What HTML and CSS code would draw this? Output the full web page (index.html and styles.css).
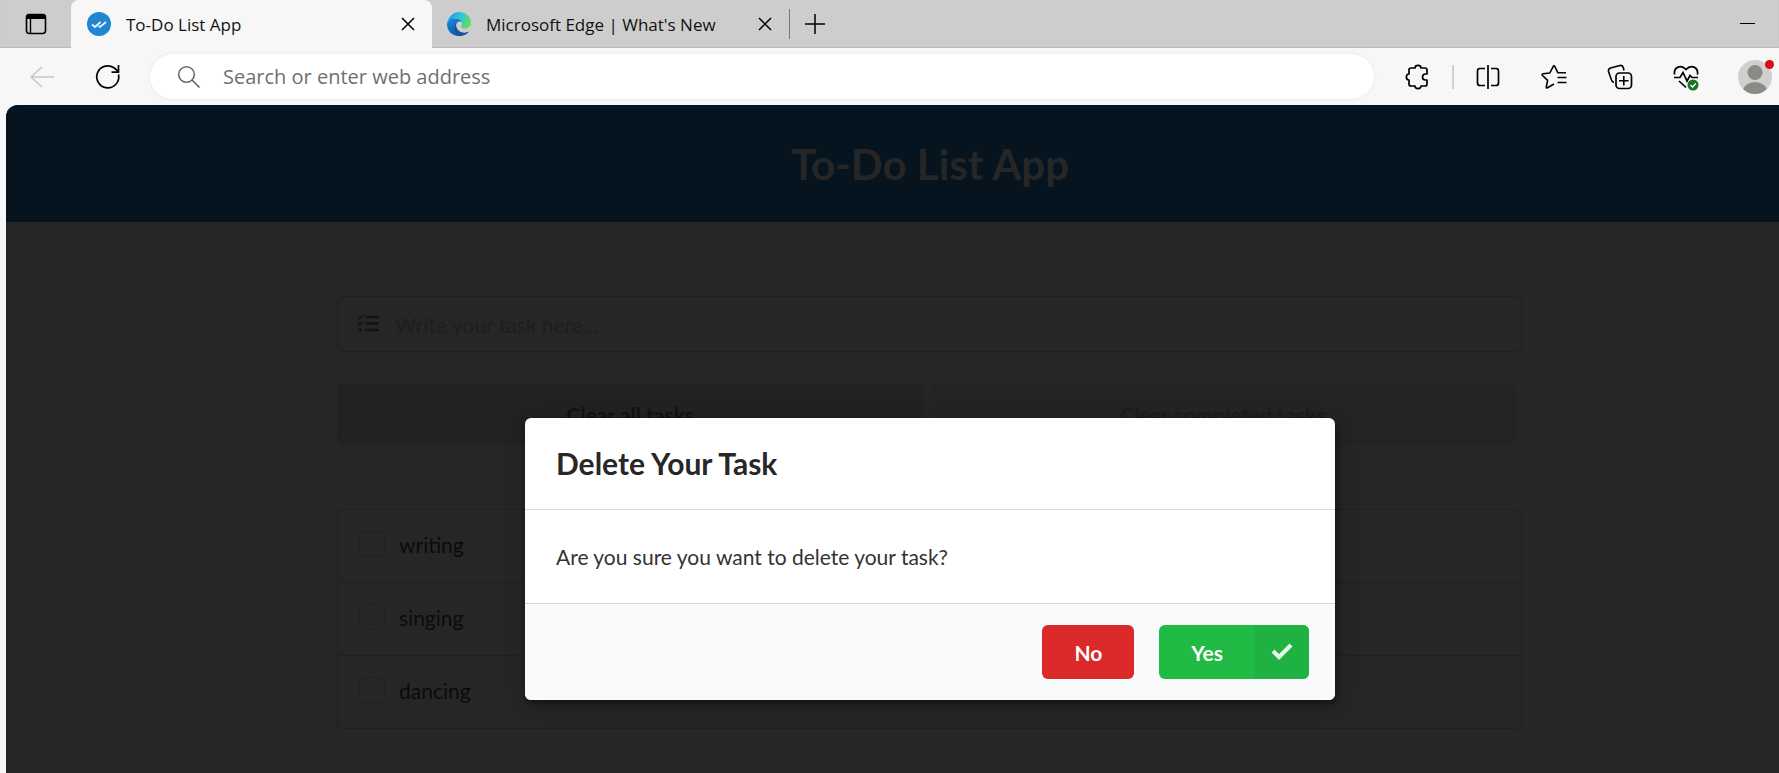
FILE: index.html
```html
<!DOCTYPE html>
<html lang="en">
<head>
<meta charset="utf-8">
<title>To-Do List App</title>
<link rel="stylesheet" href="styles.css">
</head>
<body>
<div class="browser">
  <div class="tab-strip">
    <button class="tab-menu" aria-label="Tab actions menu">
      <svg width="22" height="22" viewBox="0 0 22 22"><rect x="1.5" y="1.5" width="19" height="19" rx="3" fill="none" stroke="#000" stroke-width="1.6"/><path d="M1 6V4a3 3 0 0 1 3-3h14a3 3 0 0 1 3 3v2z" fill="#000"/><path d="M5.5 6v15" stroke="#000" stroke-width="1.4"/></svg>
    </button>
    <div class="tab tab-active">
      <svg class="tab-icon" width="24" height="24" viewBox="0 0 24 24"><circle cx="12" cy="12" r="12" fill="#2185d0"/><path d="M5 12.500l3 2.500 5.500-5M11.500 14l1.500 1 6-5" fill="none" stroke="#e8f4ff" stroke-width="1.800"/></svg>
      <span class="tab-title">To-Do List App</span>
      <button class="tab-close" aria-label="Close tab"><svg width="14" height="14" viewBox="0 0 14 14"><path d="M1 1l12 12M13 1L1 13" stroke="#000" stroke-width="1.5"/></svg></button>
    </div>
    <div class="tab">
      <svg class="tab-icon" width="24" height="24" viewBox="0 0 24 24">
        <defs>
          <linearGradient id="edge-top" x1="0" y1="0.300" x2="1" y2="0.600"><stop offset="0" stop-color="#2493df"/><stop offset="0.500" stop-color="#2fc3dc"/><stop offset="1" stop-color="#66e05a"/></linearGradient>
          <linearGradient id="edge-low" x1="0" y1="0" x2="0.700" y2="1"><stop offset="0" stop-color="#168de0"/><stop offset="1" stop-color="#104c9c"/></linearGradient>
        </defs>
        <path d="M0 12C1 5 6 0 12 0c7 0 12 5 12 10.500 0 4-3 6-6 6-2.500 0-4-1-4-1.700 0-.6 1-1.200 1-3C15 9 12 6.500 8 6.500 4 6.500 1 9 0 12z" fill="url(#edge-top)"/>
        <path d="M0 12c1-3.500 4-5.500 8-5.500 3.500 0 6 1.500 6.800 3.500-3-1.500-5.800.5-5.800 4 0 4 4 7 8 7 2 0 3.500-.6 4.800-1.200C20 22.500 16 24 12 24 5 24 0 19 0 12z" fill="url(#edge-low)"/>
        <path d="M9 11c-3 4.500-1 11 5 12.800 3-.3 6-1.800 7.800-4.300-1.300.7-2.800 1.300-4.800 1.300-5 0-8.500-4.500-8-9.800z" fill="#1b4f9e"/>
      </svg>
      <span class="tab-title">Microsoft Edge | What's New</span>
      <button class="tab-close" aria-label="Close tab"><svg width="14" height="14" viewBox="0 0 14 14"><path d="M1 1l12 12M13 1L1 13" stroke="#000" stroke-width="1.500"/></svg></button>
    </div>
    <span class="tab-divider"></span>
    <button class="new-tab" aria-label="New tab"><svg width="22" height="22" viewBox="0 0 22 22"><path d="M11 1v20M1 11h20" stroke="#000" stroke-width="1.500"/></svg></button>
    <button class="minimize" aria-label="Minimize"><svg width="16" height="2" viewBox="0 0 16 2"><path d="M0 .5h15" stroke="#000"/></svg></button>
  </div>

  <div class="toolbar">
    <button class="tool" aria-label="Back" disabled><svg width="28" height="28" viewBox="0 0 28 28"><path d="M26 14H3M14 4L3 14l11 10" fill="none" stroke="#c8c8c8" stroke-width="1.600"/></svg></button>
    <button class="tool" aria-label="Refresh"><svg width="28" height="28" viewBox="0 0 28 28"><path d="M24.500 11.500A11 11 0 1 1 20 4.800l4.500 3.800M24.500 2v7.200h-7" fill="none" stroke="#000" stroke-width="1.700"/></svg></button>
    <label class="address">
      <svg width="24" height="24" viewBox="0 0 24 24"><circle cx="9.500" cy="9.500" r="7.800" fill="none" stroke="#6a6a6a" stroke-width="1.600"/><path d="M15 15l7.500 7.500" stroke="#6a6a6a" stroke-width="1.700"/></svg>
      <input class="address-input" type="text" placeholder="Search or enter web address" aria-label="Address">
    </label>
    <div class="tools">
      <button class="tool" aria-label="Extensions"><svg width="28" height="28" viewBox="0 0 28 28"><path d="M5 7Q5 5 7 5H11C11 1.500 17 1.500 17 5H21Q23 5 23 7V11H21.500C17.500 11 17.500 17 21.500 17H23V21Q23 23 21 23H17C17 26.500 11 26.500 11 23H7Q5 23 5 21V17C1.500 17 1.500 11 5 11Z" fill="none" stroke="#000" stroke-width="1.700" stroke-linejoin="round"/></svg></button>
      <span class="tool-divider"></span>
      <button class="tool" aria-label="Split screen"><svg width="28" height="28" viewBox="0 0 28 28"><path d="M11 5.500H6Q3.500 5.500 3.500 8V20Q3.500 22.500 6 22.500H11M17 5.500H22Q24.500 5.500 24.500 8V20Q24.500 22.500 22 22.500H17M14 2v24" fill="none" stroke="#000" stroke-width="1.700"/></svg></button>
      <button class="tool" aria-label="Favorites"><svg width="28" height="28" viewBox="0 0 28 28"><path d="M14 21L7.500 24.800Q6 25.500 6.300 24L7.600 17.300 2.500 12.500Q1.500 11 3.200 10.700L9.800 10 13 3.800Q14 2 15 3.800L17.800 9.700H26M17.500 14.500h9M17.500 19.500h9" fill="none" stroke="#000" stroke-width="1.600" stroke-linejoin="round"/></svg></button>
      <button class="tool" aria-label="Collections"><svg width="28" height="28" viewBox="0 0 28 28"><rect x="10" y="10" width="15.500" height="15.500" rx="3.500" fill="none" stroke="#000" stroke-width="1.700"/><path d="M17.800 13v9.500M13 17.800h9.500M18 7.500L17.300 4.500Q16.500 2 14 2.500L4.500 5Q2 6 2.500 8.500L5.500 17Q6.300 19 8 19.500" fill="none" stroke="#000" stroke-width="1.600"/></svg></button>
      <button class="tool" aria-label="Browser essentials"><svg width="28" height="28" viewBox="0 0 28 28"><path d="M2.500 11.500C1.500 4 9 1 14 6.500 19 1 26.500 4 25.500 11.500M2 14.500H8L11 9.500l4 8.500 3-5.500 2 2H26M7 18l7 6.500" fill="none" stroke="#000" stroke-width="1.700"/><circle cx="21" cy="22" r="5.500" fill="#1c7424"/><path d="M18.500 22l2 2 3.300-3.500" fill="none" stroke="#fff" stroke-width="1.300"/></svg></button>
      <button class="tool tool-profile" aria-label="Profile">
        <svg width="34" height="34" viewBox="0 0 34 34"><defs><clipPath id="avatar"><circle cx="17" cy="17" r="17"/></clipPath></defs><circle cx="17" cy="17" r="17" fill="#d2d0ce"/><g clip-path="url(#avatar)" fill="#8c8a87"><circle cx="17" cy="12.500" r="7.500"/><ellipse cx="17" cy="31" rx="12" ry="9"/></g></svg>
        <span class="notice"></span>
      </button>
    </div>
  </div>

  <div class="viewport">
    <header class="page-header"><h1 class="page-title">To-Do List App</h1></header>
    <main class="page-body">
      <label class="task-field">
        <svg width="22" height="20" viewBox="0 0 22 20"><path d="M9 3h12M9 9.500h12M9 16h12" stroke="#141414" stroke-width="2.600" stroke-linecap="round"/><path d="M1 3l1.800 1.800L6 1M1 9.500l1.800 1.800L6 7.500" fill="none" stroke="#141414" stroke-width="1.800"/><circle cx="3" cy="16" r="1.800" fill="#141414"/></svg>
        <input class="task-input" type="text" placeholder="Write your task here..." aria-label="New task">
      </label>
      <div class="actions">
        <button class="action">Clear all tasks</button>
        <button class="action action-muted" disabled>Clear completed tasks</button>
      </div>
      <ul class="tasks">
        <li class="task"><label class="task-label"><input class="task-check" type="checkbox">writing</label></li>
        <li class="task"><label class="task-label"><input class="task-check" type="checkbox">singing</label></li>
        <li class="task"><label class="task-label"><input class="task-check" type="checkbox">dancing</label></li>
      </ul>
    </main>
    <div class="modal-layer">
      <section class="modal" role="dialog" aria-labelledby="modal-title">
        <h2 class="modal-title" id="modal-title">Delete Your Task</h2>
        <p class="modal-text">Are you sure you want to delete your task?</p>
        <div class="modal-actions">
          <button class="button button-no">No</button>
          <button class="button button-yes"><span class="button-label">Yes</span><span class="button-icon"><svg width="22" height="18" viewBox="0 0 22 18"><path d="M2 8l6 6L20 2" fill="none" stroke="#e6f6e9" stroke-width="4.200"/></svg></span></button>
        </div>
      </section>
    </div>
  </div>
</div>
</body>
</html>
```
FILE: styles.css
```css
* { box-sizing: border-box; }
html, body { height: 100%; }
body { margin: 0; overflow: hidden; background: #f7f7f7; font-family: "Open Sans", "Noto Sans", sans-serif; }
button, input { font: inherit; }
button { margin: 0; padding: 0; border: 0; background: none; }
svg { display: block; flex: none; }

.browser { display: flex; flex-direction: column; height: 100%; }

/* Tab strip */
.tab-strip { display: flex; flex: none; height: 48px; background: #cdcdcd; box-shadow: inset 0 -1px 1px #b8b8b8; }
.tab-menu { display: grid; place-items: center; width: 71px; padding-left: 1px; }
.tab { display: flex; align-items: center; width: 357px; padding: 0 16px 0 15px; font-size: 17px; color: #111; }
.tab-active { width: 361px; padding-left: 16px; border-radius: 8px 8px 0 0; background: #f7f7f7; }
.tab-icon { margin-right: 15px; }
.tab-title { flex: 1; white-space: nowrap; }
.tab-close { display: grid; place-items: center; width: 16px; height: 24px; }
.tab-divider { align-self: center; width: 1px; height: 30px; background: #777; }
.new-tab { width: 50px; display: grid; place-items: center; }
.minimize { width: 62px; margin-left: auto; display: grid; place-items: center; }

/* Toolbar */
.toolbar { display: flex; flex: none; align-items: center; height: 57px; padding: 0 7px 0 28px; background: #f7f7f7; }
.tool { position: relative; display: grid; place-items: center; width: 28px; height: 34px; }
.tool + .tool { margin-left: 38px; }
.address { display: flex; flex: 1; align-items: center; gap: 22px; height: 45px; margin: 0 30px 0 28px; padding: 0 27px; border-radius: 23px; background: #fff; box-shadow: 0 0 3px #e2e2e2; }
.address-input { flex: 1; min-width: 0; padding: 0; border: 0; outline: 0; background: none; font-size: 20px; }
.address-input::placeholder { color: #6f6f6f; opacity: 1; }
.tools { display: flex; align-items: center; }
.tool-divider { width: 2px; height: 24px; margin: 0 20px; background: #cfcfcf; }
.tools .tool-profile { width: 34px; }
.notice { position: absolute; top: 0; right: -2px; width: 9px; height: 9px; border-radius: 50%; background: #d90b15; }

/* Dimmed page; its centre line sits right of the window's */
.viewport { position: relative; flex: 1; min-height: 0; margin-left: 6px; overflow: hidden; border-radius: 12px 0 0 0; background: #262626; font-family: Lato, sans-serif; font-size: 21px; }
.page-header { display: grid; place-items: center; height: 117px; padding-left: 75px; background: #05141f; }
.page-title { margin: 0; font-size: 42px; line-height: 54px; font-weight: 700; color: #262626; }
.page-body { padding: 74px 257px 0 331px; }
.task-field { display: flex; align-items: center; gap: 16px; height: 56px; padding: 0 19px; border: 1px solid #202020; border-radius: 6px; }
.task-input { flex: 1; min-width: 0; padding: 0; border: 0; outline: 0; background: none; }
.task-input::placeholder { color: #1e1e1e; opacity: 1; }
.actions { display: flex; gap: 6px; margin: 31px 6px 0 0; }
.action { flex: 1; height: 62px; border-radius: 6px; background: #222; font-weight: 700; color: #121212; }
.action-muted { background: #242424; color: #1c1c1c; }
.tasks { margin: 64px 0 0; padding: 0; border: 1px solid #202020; border-top: 0; border-radius: 6px; list-style: none; }
.task { height: 73px; padding: 0 21px; border-top: 1px solid #202020; }
.task:first-child { border-radius: 6px 6px 0 0; }
.task-label { display: flex; align-items: center; gap: 14px; height: 68px; color: #0b0b0b; }
.task-check { appearance: none; width: 26px; height: 26px; margin: 0; border: 1px solid #202020; border-radius: 5px; }

/* Confirmation dialog */
.modal-layer { position: absolute; inset: 0; display: flex; align-items: flex-end; justify-content: center; padding: 0 0 73px 75px; }
.modal { width: 810px; overflow: hidden; border-radius: 6px; background: #fff; box-shadow: 1px 4px 5px rgba(0, 0, 0, .3), 2px 5px 22px rgba(0, 0, 0, .3); }
.modal-title { margin: 0; padding: 26px 31px; border-bottom: 1px solid #dadbdb; font-size: 30px; line-height: 39px; font-weight: 700; color: #272727; }
.modal-text { margin: 0; padding: 32px 31px; font-size: 21px; line-height: 29px; color: #333; }
.modal-actions { display: flex; justify-content: flex-end; gap: 25px; padding: 21px 26px; border-top: 1px solid #d4d6d7; background: #f9fafb; }
.button { height: 54px; overflow: hidden; border-radius: 6px; font-weight: 700; color: #fff; }
.button-no { padding: 0 32px; background: #db2828; }
.button-yes { display: flex; background: #21ba45; }
.button-label { padding: 0 32px; line-height: 56px; }
.button-icon { display: grid; place-items: center; width: 54px; height: 54px; background: #1fb141; }
```
